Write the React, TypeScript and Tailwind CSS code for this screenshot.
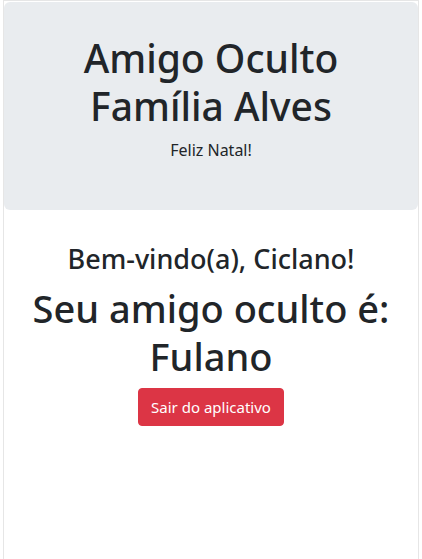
export default function App() {
    return (
        <div className="min-h-[559px] bg-white font-['Noto_Sans',sans-serif] text-[#212529]">
            <div className="mx-[3px] min-h-[559px] border-x border-t border-[#e6e6e6] pt-px">
                <div className="rounded-md bg-[#e9ecef] px-4 py-8 text-center">
                    <h1 className="mb-2 text-[39px] leading-[48px] font-medium">
                        Amigo Oculto
                        <br />
                        Família Alves
                    </h1>
                    <p className="mb-4 text-base leading-6">Feliz Natal!</p>
                </div>

                <div className="mt-8 flex flex-col items-center px-4 text-center">
                    <h3 className="mb-2 text-[27px] leading-[34px] font-medium">Bem-vindo(a), Ciclano!</h3>
                    <h1 className="mb-2 text-[38px] leading-[48px] font-medium">
                        Seu amigo oculto é:
                        <br />
                        Fulano
                    </h1>
                    <button className="rounded border border-[#dc3545] bg-[#dc3545] px-3 py-1.5 text-[15px] leading-6 text-white">
                        Sair do aplicativo
                    </button>
                </div>
            </div>
        </div>
    )
}
